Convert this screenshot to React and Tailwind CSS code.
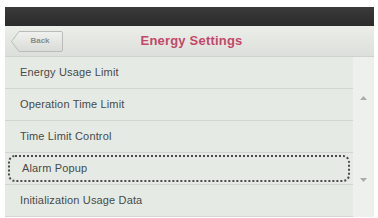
import React from "react";

const items = [
  "Energy Usage Limit",
  "Operation Time Limit",
  "Time Limit Control",
  "Alarm Popup",
  "Initialization Usage Data",
];

function BackButton() {
  return (
    <div className="relative w-[52px] h-[21px] ml-[6px]">
      <svg width="52" height="21" viewBox="0 0 52 21" className="absolute inset-0">
        <defs>
          <linearGradient id="bk" x1="0" y1="0" x2="0" y2="1">
            <stop offset="0" stopColor="#f1f2ef" />
            <stop offset="1" stopColor="#d9dbd7" />
          </linearGradient>
        </defs>
        <path d="M0.5 10.5 L8 0.5 H50 a1.5 1.5 0 0 1 1.5 1.5 V19 a1.5 1.5 0 0 1 -1.5 1.5 H8 Z" fill="url(#bk)" stroke="#b9bcb8" />
      </svg>
      <span className="absolute inset-0 flex items-center justify-center pl-[6px] text-[8px] text-[#8a8c89] font-bold">
        Back
      </span>
    </div>
  );
}

export default function App() {
  return (
    <div
      className="w-[378px] h-[218px] bg-white pl-[5px] pr-[4px] pt-[7px] overflow-hidden"
      style={{ fontFamily: "'Liberation Sans', Arial, sans-serif" }}
    >
      <div className="h-[19px] bg-gradient-to-b from-[#3a3a3a] to-[#2b2b2b]" />
      <div className="h-[31px] bg-gradient-to-b from-[#eceeea] to-[#dcdfdb] border-b border-[#cfd2ce] flex items-center relative">
        <BackButton />
        <div className="absolute inset-0 flex items-center justify-center pl-[4px] text-[13px] font-bold text-[#c2486a] tracking-[0.2px]">
          Energy Settings
        </div>
      </div>
      <div className="flex bg-[#e6eae5]">
        <div className="flex-1">
          {items.map((t, i) => (
            <div key={t} className="h-[32px] border-b border-[#d2d5d1] px-[3px] py-[2px]">
              <div
                className={`h-full flex items-center pl-[12px] text-[11px] text-[#474a47] tracking-[0.15px] ${
                  i === 3 ? "border-2 border-dotted border-[#4a4a4a] rounded-[7px] pl-[10px]" : ""
                }`}
              >
                {t}
              </div>
            </div>
          ))}
        </div>
        <div className="w-[21px] bg-[#eef0ed] flex flex-col items-center pt-[39px]">
          <svg width="7" height="4" viewBox="0 0 7 4">
            <path d="M0 4 L3.5 0 L7 4 Z" fill="#a9aca8" />
          </svg>
          <div className="h-[78px]" />
          <svg width="7" height="4" viewBox="0 0 7 4">
            <path d="M0 0 L3.5 4 L7 0 Z" fill="#a9aca8" />
          </svg>
        </div>
      </div>
    </div>
  );
}
